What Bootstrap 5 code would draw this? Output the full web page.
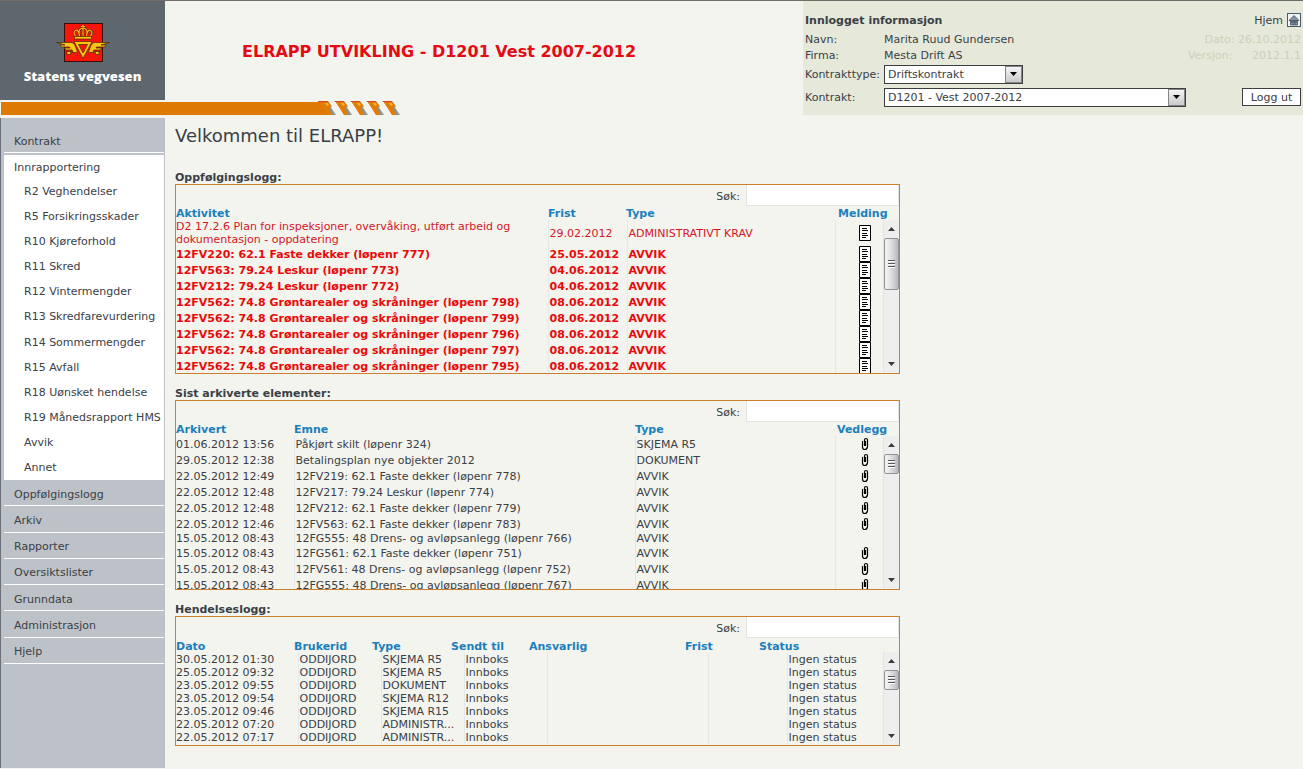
<!DOCTYPE html>
<html lang="no">
<head>
<meta charset="utf-8">
<meta name="viewport" content="width=device-width, initial-scale=1">
<title>ELRAPP</title>
<link href="https://cdn.jsdelivr.net/npm/bootstrap@5.3.0/dist/css/bootstrap.min.css" rel="stylesheet">
<style>
  :root { --ink: #3a4046; --side: #bdc2c8; --frame: #cd7f2e; --blue: #1b7fbd; }
  body { font-family: "DejaVu Sans", Verdana, sans-serif; font-size: 11px; line-height: 13px; color: var(--ink); background: #f3f4ee; border-top: 1px solid #716d69; }
  a { color: inherit; text-decoration: none; }

  /* header */
  .brand { width: 165px; height: 99px; background: #5f676e; color: #fff; padding-top: 21px; }
  .brand-name { font: 800 13px/16px "Open Sans", sans-serif; }
  .app-title { font-size: 16px; line-height: 20px; font-weight: 700; color: #e60a12; padding: 2px 0 0 77px; }
  .stripe { height: 15px; border-left: 1px solid #f3f4ee; }
  .stripe-bar { width: 317px; height: 13px; margin-top: 2px; background: #df7a00; }
  .info { width: 500px; height: 114px; background: #e6e9da; padding: 9px 2px 0; display: grid; grid-template-columns: 79px 1fr auto; grid-template-rows: 20px 18px 15px 22px 24px; align-items: center; }
  .info h2 { font-size: 11px; line-height: 13px; font-weight: 700; margin: 0; grid-column: span 2; }
  .faded { color: #cbd0b9; }
  .version-row { width: 113px; }
  .pick { appearance: none; height: 19px; border: 1px solid #3b3f42; border-radius: 0; color: var(--ink); padding: 0 20px 0 3px; line-height: 15px;
    background: #fff url("data:image/svg+xml,%3Csvg xmlns='http://www.w3.org/2000/svg' width='17' height='17'%3E%3Cdefs%3E%3ClinearGradient id='g' x2='0' y2='1'%3E%3Cstop stop-color='%23f6f6f6'/%3E%3Cstop offset='1' stop-color='%23c9c9c9'/%3E%3C/linearGradient%3E%3C/defs%3E%3Crect x='.5' y='.5' width='16' height='16' fill='url(%23g)' stroke='%23858585'/%3E%3Cpath d='M5 6h7l-3.500 4z' fill='%23000'/%3E%3C/svg%3E") right center no-repeat; }
  .pick-short { width: 139px; }
  .pick-long { width: 302px; }
  .logout { width: 59px; height: 18px; background: #fff; border: 1px solid #3b3f42; color: var(--ink); padding: 0; line-height: 15px; }

  /* side menu */
  .page-row { min-height: calc(100vh - 119px); margin-top: 3px; }
  .side { width: 165px; background: var(--side); border-left: 1px solid #6a717b; padding: 0 1px 0 3px; }
  .side ul { list-style: none; margin: 0; padding: 0; }
  .side a { display: flex; align-items: center; height: 100%; padding-left: 10px; }
  .first-item { height: 35px; padding-top: 12px; border-bottom: 1px solid #fff; }
  .open-item { background: #fff; margin-top: 2px; }
  .side .open-head { height: 24px; }
  .side .sub-list { display: grid; grid-auto-rows: 1fr; height: 301px; }
  .side .sub-list a { padding-left: 20px; white-space: nowrap; }
  .side .rest-list { display: grid; grid-auto-rows: 1fr; height: 184px; }
  .rest-list > li { border-bottom: 1px solid #fff; padding-top: 3px; }

  /* logs */
  .logs { max-width: 745px; padding: 0 10px; }
  .logs h1 { font-size: 18px; line-height: 22px; font-weight: 400; margin: 7px 0 25px; }
  .logs h2 { font-size: 11px; line-height: 12px; font-weight: 700; margin: 0; }
  .log-box { height: 190px; border: 1px solid var(--frame); overflow: hidden; margin-bottom: 14px; }
  .log-box.short { height: 130px; margin-bottom: 0; }
  .search-row { height: 22px; }
  .search-row label { padding-right: 6px; }
  .search-row input { width: 153px; height: 21px; border: 1px solid #e6e6e6; border-top: 0; background: #fff; padding: 0 4px; }
  .log-table { display: block; width: 100%; }
  .log-table thead, .log-table tbody { display: table; table-layout: fixed; width: 100%; }
  .log-table th, .log-table td { padding: 0; white-space: nowrap; }
  .log-table th { color: var(--blue); font-weight: 700; height: 13px; }
  .log-table td { height: 16px; vertical-align: middle; }
  .log-table td + td { border-left: 1px solid #e1e9ed; padding-left: 1px; }
  .log-table td.wrap { white-space: normal; height: 26px; padding-right: 20px; }
  .log-table tr.plain td, .short td { height: 13px; }
  .short .log-table th { height: 14px; }
  .short .log-table td { height: 13px; }
  .log-table svg { display: block; margin-left: 22px; }
  .log-table .late { color: #d41428; }
  .log-table .overdue { color: #ea0a0a; font-weight: 700; }
  .w74 { width: 74px; } .w78 { width: 78px; } .w79 { width: 79px; } .w83 { width: 83px; }
  .w118 { width: 118px; } .w122 { width: 122px; } .w156 { width: 156px; } .w161 { width: 161px; }
  .w200 { width: 200px; } .w202 { width: 202px; } .w208 { width: 208px; } .w212 { width: 212px; } .w341 { width: 341px; } .w372 { width: 372px; }

  /* scroll bar at the right edge of a log */
  .bar-track { position: absolute; top: 35px; right: 0; bottom: 0; width: 16px; background: #eeeeef; border-left: 1px solid #e4e6e6; }
  .bar-thumb { height: 52px; border: 1px solid #8f9195; border-radius: 2px; background: linear-gradient(90deg, #f7f7f7, #dcdcde 50%, #b9babe); }
  .bar-thumb.small-thumb { height: 20px; }
  .bar-arrow { height: 18px; }
</style>
</head>
<body>
<svg width="0" height="0" class="position-absolute" aria-hidden="true">
  <symbol id="doc" viewBox="0 0 12 16"><path fill="#fff" stroke="#000" d="M.5.5h11v15H.5z"/><path stroke="#000" d="M3 3.500h5M3 5.500h6M3 8.500h5M3 10.500h6M3 12.500h4"/></symbol>
  <symbol id="clip" viewBox="0 0 8 14"><path fill="none" stroke="#000" stroke-width="1.200" d="M1.500 4v6q0 2.500 2.200 2.500T6.500 10V3Q6.500 1.500 5 1.500T3.500 3v5.500h1V4"/></symbol>
  <symbol id="up" viewBox="0 0 7 4"><path fill="#3c3c3c" d="M0 4 3.500 0 7 4z"/></symbol>
  <symbol id="down" viewBox="0 0 7 4"><path fill="#3c3c3c" d="M0 0h7L3.500 4z"/></symbol>
  <symbol id="grip" viewBox="0 0 7 8"><path stroke="#55585c" d="M0 .5h7M0 3.500h7M0 6.500h7"/><path stroke="#fff" d="M0 1.500h7M0 4.500h7M0 7.500h7"/></symbol>
</svg>

<header class="d-flex">
  <div class="flex-fill">
    <div class="d-flex align-items-center">
      <a href="#" class="brand d-flex flex-column align-items-center flex-shrink-0">
        <svg width="54" height="42" viewBox="0 0 54 42" aria-hidden="true">
          <rect x="8.500" y="1.500" width="38" height="38" fill="#f5150a" stroke="#3c0d08"/>
          <g stroke="#4a2406" stroke-width=".7" fill="#fdc614">
            <path d="M.5 20.500H15q3 0 4 3l2 5q1 2-1 2h-5.500v2H11v-3h6l-1-1.500H9.500l-1-2H14l-.5-1H5.500l-1.500-2h5z"/>
            <path d="M53.500 20.500H39q-3 0-4 3l-2 5q-1 2 1 2h5.500v2H43v-3h-6l1-1.500h6.500l1-2H40l.5-1h8l1.500-2h-5z"/>
            <path fill-rule="evenodd" d="M18 19.500h18L27 36.500zM22.500 22.500 27 31l4.500-8.500z"/>
            <path d="M18.500 14.500h17v2.500h-17z"/>
          </g>
          <g fill="none" stroke="#5a2606" stroke-width="2.400"><path d="M19.500 14q-3-4 0-5.500t4 5.500q-1.500-6 1.500-7.500h4q3 1.500 1.500 7.500 1-7 4-5.500t0 5.500M27 14V3M25 4.500h4"/></g>
          <g fill="none" stroke="#fdb714" stroke-width="1.200"><path d="M19.500 14q-3-4 0-5.500t4 5.500q-1.500-6 1.500-7.500h4q3 1.500 1.500 7.500 1-7 4-5.500t0 5.500M27 14V3M25 4.500h4"/></g>
        </svg>
        <span class="brand-name mt-1">Statens vegvesen</span>
      </a>
      <div class="app-title">ELRAPP UTVIKLING - D1201 Vest 2007-2012</div>
    </div>
    <div class="stripe d-flex">
      <div class="stripe-bar"></div>
      <svg width="84" height="15" viewBox="0 0 84 15" aria-hidden="true">
        <path fill="#df7a00" d="M0 1h9l4 14H0z"/>
        <g id="s1"><path fill="#8e9290" d="M7 6h5l6 9h-8z"/><path fill="#e27c04" d="M1 1h9l4 5.500-3 1 3 7.500h-4z"/><path fill="#d5452c" d="M0 1h9l2 2-2-1H1z"/><path fill="#f5b83a" d="M7 3h2.500l1.500 2-2 1z"/></g>
        <use href="#s1" x="16"/><use href="#s1" x="32"/><use href="#s1" x="48"/><use href="#s1" x="64"/>
      </svg>
    </div>
  </div>
  <section class="info flex-shrink-0">
    <h2>Innlogget informasjon</h2>
    <a href="#" class="text-end d-flex justify-content-end align-items-center gap-1">Hjem
      <svg width="14" height="14" viewBox="0 0 14 14" aria-hidden="true"><rect x=".5" y=".5" width="13" height="13" fill="#f2f5f7" stroke="#4c5a66"/><path d="M7 2.500 2 7.500h10zM3.500 8h7v4h-7z" fill="#8494a2" stroke="#41505d" stroke-width=".8"/><path d="M4 9.500h6M6 8v4M8 8v4" stroke="#41505d" stroke-width=".6"/></svg>
    </a>
    <span>Navn:</span><span>Marita Ruud Gundersen</span><span class="faded text-end">Dato: 26.10.2012</span>
    <span>Firma:</span><span>Mesta Drift AS</span><span class="faded version-row d-flex justify-content-between"><span>Versjon:</span><span>2012.1.1</span></span>
    <label for="ktype">Kontrakttype:</label>
    <select id="ktype" class="pick pick-short"><option>Driftskontrakt</option></select><span></span>
    <label for="kontrakt">Kontrakt:</label>
    <select id="kontrakt" class="pick pick-long"><option>D1201 - Vest 2007-2012</option></select>
    <button type="button" class="logout ms-auto">Logg ut</button>
  </section>
</header>

<div class="page-row d-flex">
  <nav class="side flex-shrink-0" aria-label="Hovedmeny">
    <ul>
      <li class="first-item"><a href="#">Kontrakt</a></li>
      <li class="open-item">
        <a href="#" class="open-head">Innrapportering</a>
        <ul class="sub-list">
          <li><a href="#">R2 Veghendelser</a></li>
          <li><a href="#">R5 Forsikringsskader</a></li>
          <li><a href="#">R10 Kjøreforhold</a></li>
          <li><a href="#">R11 Skred</a></li>
          <li><a href="#">R12 Vintermengder</a></li>
          <li><a href="#">R13 Skredfarevurdering</a></li>
          <li><a href="#">R14 Sommermengder</a></li>
          <li><a href="#">R15 Avfall</a></li>
          <li><a href="#">R18 Uønsket hendelse</a></li>
          <li><a href="#">R19 Månedsrapport HMS</a></li>
          <li><a href="#">Avvik</a></li>
          <li><a href="#">Annet</a></li>
        </ul>
      </li>
    </ul>
    <ul class="rest-list">
      <li><a href="#">Oppfølgingslogg</a></li>
      <li><a href="#">Arkiv</a></li>
      <li><a href="#">Rapporter</a></li>
      <li><a href="#">Oversiktslister</a></li>
      <li><a href="#">Grunndata</a></li>
      <li><a href="#">Administrasjon</a></li>
      <li><a href="#">Hjelp</a></li>
    </ul>
  </nav>

  <main class="logs flex-fill">
    <h1>Velkommen til ELRAPP!</h1>

    <h2>Oppfølgingslogg:</h2>
    <section class="log-box position-relative">
      <div class="search-row d-flex justify-content-end"><label for="sok1" class="align-self-center">Søk:</label><input type="text" id="sok1"></div>
      <table class="log-table">
        <thead><tr><th class="w372">Aktivitet</th><th class="w78">Frist</th><th class="w212">Type</th><th>Melding</th></tr></thead>
        <tbody>
          <tr class="late"><td class="wrap w372">D2 17.2.6 Plan for inspeksjoner, overvåking, utført arbeid og dokumentasjon - oppdatering</td><td class="w79">29.02.2012</td><td class="w208">ADMINISTRATIVT KRAV</td><td><svg width="12" height="16"><use href="#doc"/></svg></td></tr>
          <tr class="overdue"><td>12FV220: 62.1 Faste dekker (løpenr 777)</td><td>25.05.2012</td><td>AVVIK</td><td><svg width="12" height="16"><use href="#doc"/></svg></td></tr>
          <tr class="overdue"><td>12FV563: 79.24 Leskur (løpenr 773)</td><td>04.06.2012</td><td>AVVIK</td><td><svg width="12" height="16"><use href="#doc"/></svg></td></tr>
          <tr class="overdue"><td>12FV212: 79.24 Leskur (løpenr 772)</td><td>04.06.2012</td><td>AVVIK</td><td><svg width="12" height="16"><use href="#doc"/></svg></td></tr>
          <tr class="overdue"><td>12FV562: 74.8 Grøntarealer og skråninger (løpenr 798)</td><td>08.06.2012</td><td>AVVIK</td><td><svg width="12" height="16"><use href="#doc"/></svg></td></tr>
          <tr class="overdue"><td>12FV562: 74.8 Grøntarealer og skråninger (løpenr 799)</td><td>08.06.2012</td><td>AVVIK</td><td><svg width="12" height="16"><use href="#doc"/></svg></td></tr>
          <tr class="overdue"><td>12FV562: 74.8 Grøntarealer og skråninger (løpenr 796)</td><td>08.06.2012</td><td>AVVIK</td><td><svg width="12" height="16"><use href="#doc"/></svg></td></tr>
          <tr class="overdue"><td>12FV562: 74.8 Grøntarealer og skråninger (løpenr 797)</td><td>08.06.2012</td><td>AVVIK</td><td><svg width="12" height="16"><use href="#doc"/></svg></td></tr>
          <tr class="overdue"><td>12FV562: 74.8 Grøntarealer og skråninger (løpenr 795)</td><td>08.06.2012</td><td>AVVIK</td><td><svg width="12" height="16"><use href="#doc"/></svg></td></tr>
        </tbody>
      </table>
      <div class="bar-track d-flex flex-column" aria-hidden="true">
        <div class="bar-arrow d-flex align-items-center justify-content-center"><svg width="7" height="4"><use href="#up"/></svg></div>
        <div class="bar-thumb d-flex align-items-center justify-content-center"><svg width="7" height="8"><use href="#grip"/></svg></div>
        <div class="bar-arrow mt-auto d-flex align-items-center justify-content-center"><svg width="7" height="4"><use href="#down"/></svg></div>
      </div>
    </section>

    <h2>Sist arkiverte elementer:</h2>
    <section class="log-box position-relative">
      <div class="search-row d-flex justify-content-end"><label for="sok2" class="align-self-center">Søk:</label><input type="text" id="sok2"></div>
      <table class="log-table">
        <thead><tr><th class="w118">Arkivert</th><th class="w341">Emne</th><th class="w202">Type</th><th>Vedlegg</th></tr></thead>
        <tbody>
          <tr><td class="w118">01.06.2012 13:56</td><td class="w341">Påkjørt skilt (løpenr 324)</td><td class="w200">SKJEMA R5</td><td><svg width="12" height="14"><use href="#clip"/></svg></td></tr>
          <tr><td>29.05.2012 12:38</td><td>Betalingsplan nye objekter 2012</td><td>DOKUMENT</td><td><svg width="12" height="14"><use href="#clip"/></svg></td></tr>
          <tr><td>22.05.2012 12:49</td><td>12FV219: 62.1 Faste dekker (løpenr 778)</td><td>AVVIK</td><td><svg width="12" height="14"><use href="#clip"/></svg></td></tr>
          <tr><td>22.05.2012 12:48</td><td>12FV217: 79.24 Leskur (løpenr 774)</td><td>AVVIK</td><td><svg width="12" height="14"><use href="#clip"/></svg></td></tr>
          <tr><td>22.05.2012 12:48</td><td>12FV212: 62.1 Faste dekker (løpenr 779)</td><td>AVVIK</td><td><svg width="12" height="14"><use href="#clip"/></svg></td></tr>
          <tr><td>22.05.2012 12:46</td><td>12FV563: 62.1 Faste dekker (løpenr 783)</td><td>AVVIK</td><td><svg width="12" height="14"><use href="#clip"/></svg></td></tr>
          <tr class="plain"><td>15.05.2012 08:43</td><td>12FG555: 48 Drens- og avløpsanlegg (løpenr 766)</td><td>AVVIK</td><td></td></tr>
          <tr><td>15.05.2012 08:43</td><td>12FG561: 62.1 Faste dekker (løpenr 751)</td><td>AVVIK</td><td><svg width="12" height="14"><use href="#clip"/></svg></td></tr>
          <tr><td>15.05.2012 08:43</td><td>12FV561: 48 Drens- og avløpsanlegg (løpenr 752)</td><td>AVVIK</td><td><svg width="12" height="14"><use href="#clip"/></svg></td></tr>
          <tr><td>15.05.2012 08:43</td><td>12FG555: 48 Drens- og avløpsanlegg (løpenr 767)</td><td>AVVIK</td><td><svg width="12" height="14"><use href="#clip"/></svg></td></tr>
        </tbody>
      </table>
      <div class="bar-track d-flex flex-column" aria-hidden="true">
        <div class="bar-arrow d-flex align-items-center justify-content-center"><svg width="7" height="4"><use href="#up"/></svg></div>
        <div class="bar-thumb small-thumb d-flex align-items-center justify-content-center"><svg width="7" height="8"><use href="#grip"/></svg></div>
        <div class="bar-arrow mt-auto d-flex align-items-center justify-content-center"><svg width="7" height="4"><use href="#down"/></svg></div>
      </div>
    </section>

    <h2>Hendelseslogg:</h2>
    <section class="log-box short position-relative">
      <div class="search-row d-flex justify-content-end"><label for="sok3" class="align-self-center">Søk:</label><input type="text" id="sok3"></div>
      <table class="log-table">
        <thead><tr><th class="w118">Dato</th><th class="w78">Brukerid</th><th class="w79">Type</th><th class="w78">Sendt til</th><th class="w156">Ansvarlig</th><th class="w74">Frist</th><th>Status</th></tr></thead>
        <tbody>
          <tr><td class="w122">30.05.2012 01:30</td><td class="w83">ODDIJORD</td><td class="w83">SKJEMA R5</td><td class="w83">Innboks</td><td class="w161"></td><td class="w79"></td><td>Ingen status</td></tr>
          <tr><td>25.05.2012 09:32</td><td>ODDIJORD</td><td>SKJEMA R5</td><td>Innboks</td><td></td><td></td><td>Ingen status</td></tr>
          <tr><td>23.05.2012 09:55</td><td>ODDIJORD</td><td>DOKUMENT</td><td>Innboks</td><td></td><td></td><td>Ingen status</td></tr>
          <tr><td>23.05.2012 09:54</td><td>ODDIJORD</td><td>SKJEMA R12</td><td>Innboks</td><td></td><td></td><td>Ingen status</td></tr>
          <tr><td>23.05.2012 09:46</td><td>ODDIJORD</td><td>SKJEMA R15</td><td>Innboks</td><td></td><td></td><td>Ingen status</td></tr>
          <tr><td>22.05.2012 07:20</td><td>ODDIJORD</td><td>ADMINISTR...</td><td>Innboks</td><td></td><td></td><td>Ingen status</td></tr>
          <tr><td>22.05.2012 07:17</td><td>ODDIJORD</td><td>ADMINISTR...</td><td>Innboks</td><td></td><td></td><td>Ingen status</td></tr>
        </tbody>
      </table>
      <div class="bar-track d-flex flex-column" aria-hidden="true">
        <div class="bar-arrow d-flex align-items-center justify-content-center"><svg width="7" height="4"><use href="#up"/></svg></div>
        <div class="bar-thumb small-thumb d-flex align-items-center justify-content-center"><svg width="7" height="8"><use href="#grip"/></svg></div>
        <div class="bar-arrow mt-auto d-flex align-items-center justify-content-center"><svg width="7" height="4"><use href="#down"/></svg></div>
      </div>
    </section>
  </main>
</div>
<script src="https://cdn.jsdelivr.net/npm/bootstrap@5.3.0/dist/js/bootstrap.bundle.min.js"></script>
</body>
</html>
